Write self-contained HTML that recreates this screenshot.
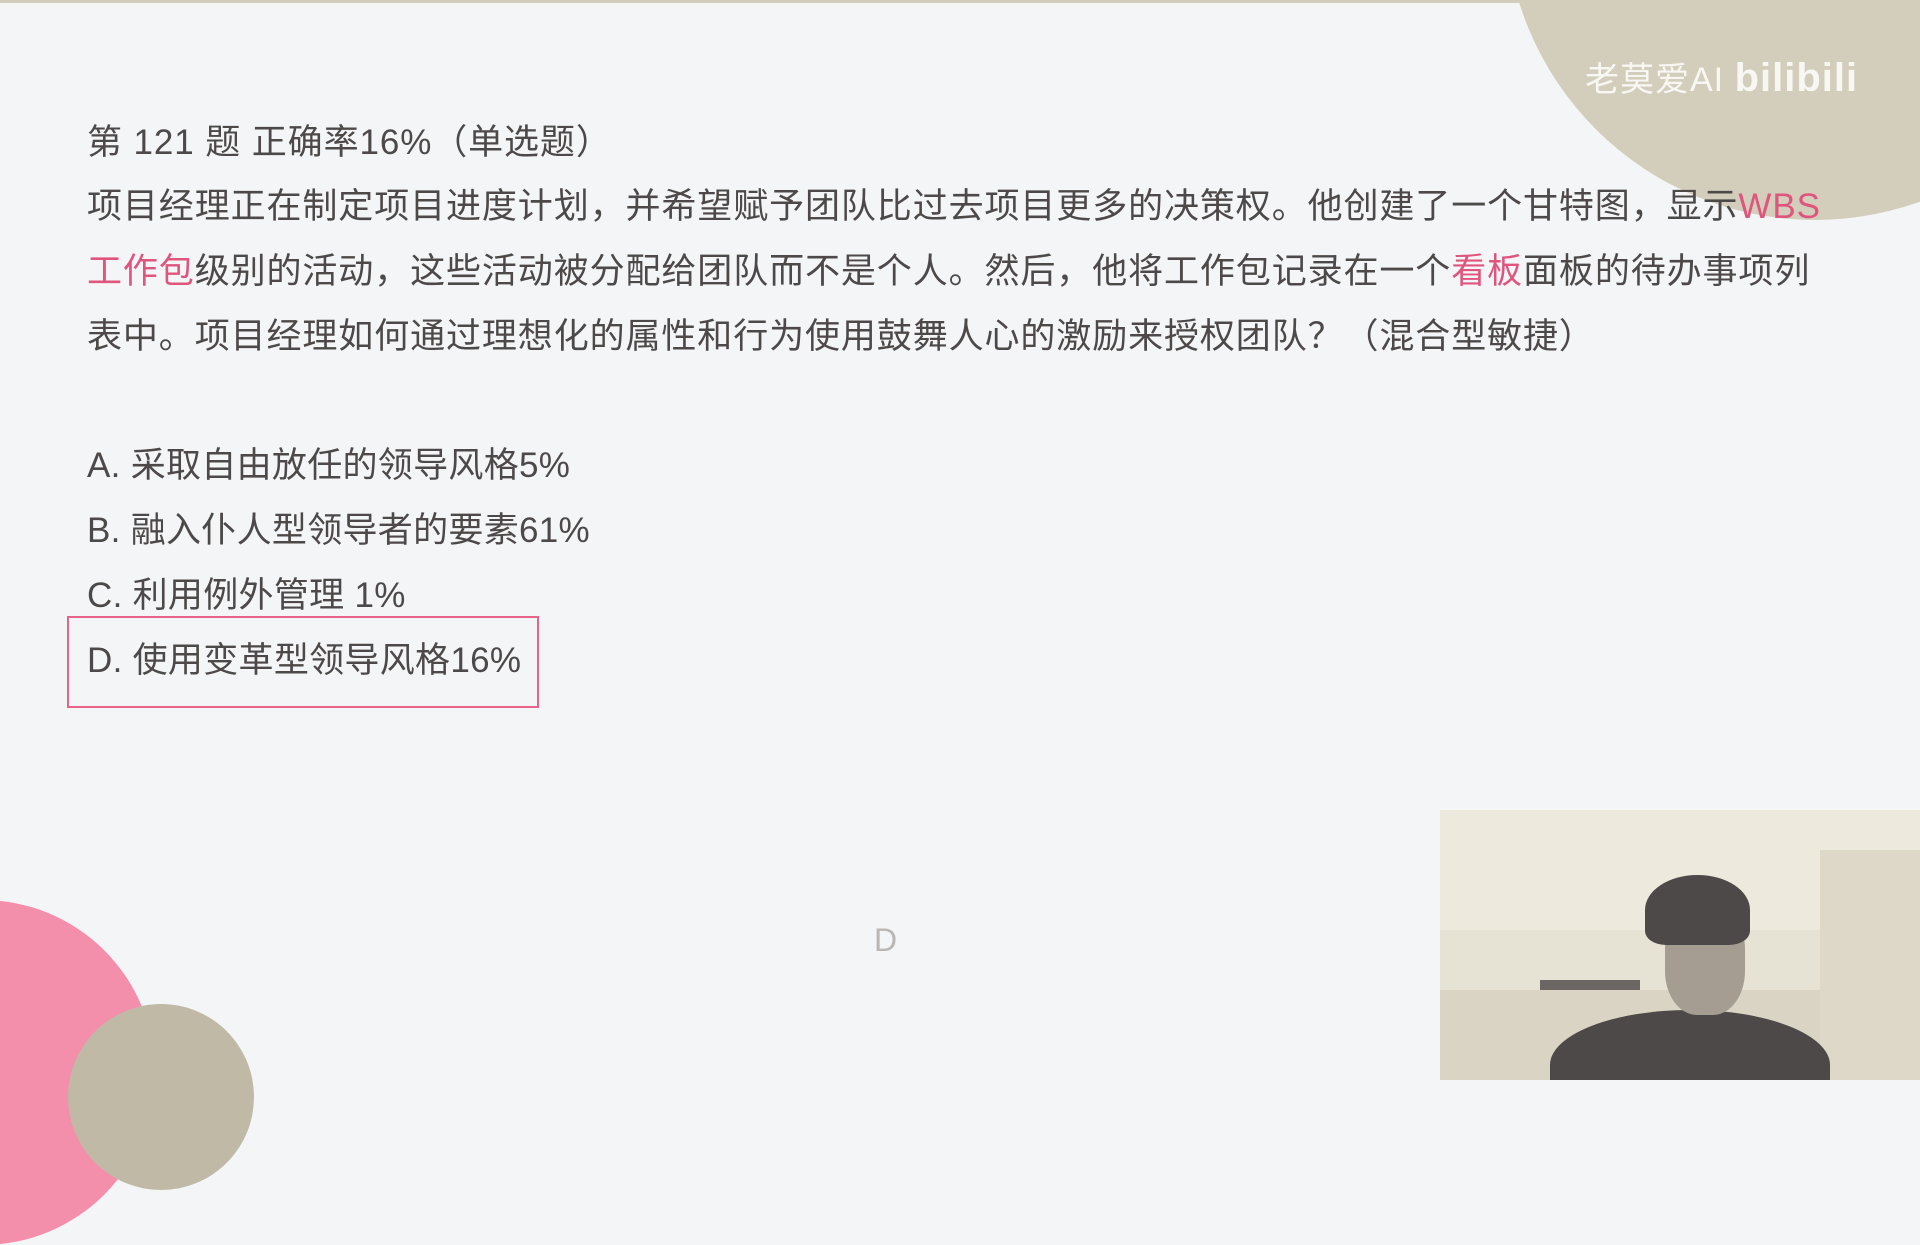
<!DOCTYPE html>
<html><head><meta charset="utf-8"><style>
html,body{margin:0;padding:0;}
body{width:1920px;height:1080px;background:#f4f5f7;position:relative;overflow:hidden;font-family:"Liberation Sans","Noto Sans CJK SC",sans-serif;color:#4d4948;}
.t{position:absolute;left:87px;font-size:35px;letter-spacing:0.9px;white-space:nowrap;line-height:1;}
.o{letter-spacing:0.3px;}
.r{color:#e0557d;}
</style></head><body>
<div style="position:absolute;left:0;top:0;width:1920px;height:3px;background:#d3cebb"></div>
<div style="position:absolute;left:1505px;top:-400px;width:620px;height:620px;border-radius:50%;background:#d3cebb"></div>
<div style="position:absolute;left:1585px;top:52px;font-size:34px;color:#fff;opacity:.85;letter-spacing:1px">老莫爱AI <span style="font-weight:bold;font-size:40px">bilibili</span></div>

<div class="t" style="top:125px">第 121 题 正确率16%（单选题）</div>
<div class="t" style="top:189px">项目经理正在制定项目进度计划，并希望赋予团队比过去项目更多的决策权。他创建了一个甘特图，显示<span class="r">WBS</span></div>
<div class="t" style="top:254px"><span class="r">工作包</span>级别的活动，这些活动被分配给团队而不是个人。然后，他将工作包记录在一个<span class="r">看板</span>面板的待办事项列</div>
<div class="t" style="top:319px">表中。项目经理如何通过理想化的属性和行为使用鼓舞人心的激励来授权团队？（混合型敏捷）</div>

<div class="t o" style="top:448px">A. 采取自由放任的领导风格5%</div>
<div class="t o" style="top:513px">B. 融入仆人型领导者的要素61%</div>
<div class="t o" style="top:578px">C. 利用例外管理 1%</div>
<div class="t o" style="top:643px">D. 使用变革型领导风格16%</div>
<div style="position:absolute;left:67px;top:616px;width:468px;height:88px;border:2px solid #e8638a;"></div>

<div style="position:absolute;left:874px;top:922px;font-size:32px;color:#b9b6b3">D</div>

<div style="position:absolute;left:-190px;top:900px;width:345px;height:345px;border-radius:50%;background:#f48fab"></div>
<div style="position:absolute;left:68px;top:1004px;width:186px;height:186px;border-radius:50%;background:#bfb9a6"></div>

<div style="position:absolute;left:1440px;top:810px;width:480px;height:270px;background:#e6e2d4;overflow:hidden">
 <div style="position:absolute;left:0;top:0;width:480px;height:120px;background:#ede9dd"></div>
 <div style="position:absolute;left:0;top:180px;width:480px;height:90px;background:#d9d4c3"></div>
 <div style="position:absolute;left:380px;top:40px;width:100px;height:230px;background:#ddd8c8"></div>
 <div style="position:absolute;left:100px;top:170px;width:100px;height:10px;background:#6b6663"></div>
 <div style="position:absolute;left:110px;top:200px;width:280px;height:110px;background:#4d4948;border-radius:50% 50% 0 0"></div>
 <div style="position:absolute;left:225px;top:95px;width:80px;height:110px;background:#a59c92;border-radius:40%"></div>
 <div style="position:absolute;left:205px;top:65px;width:105px;height:70px;background:#4d4948;border-radius:50% 50% 20% 20%"></div>
</div>
</body></html>
